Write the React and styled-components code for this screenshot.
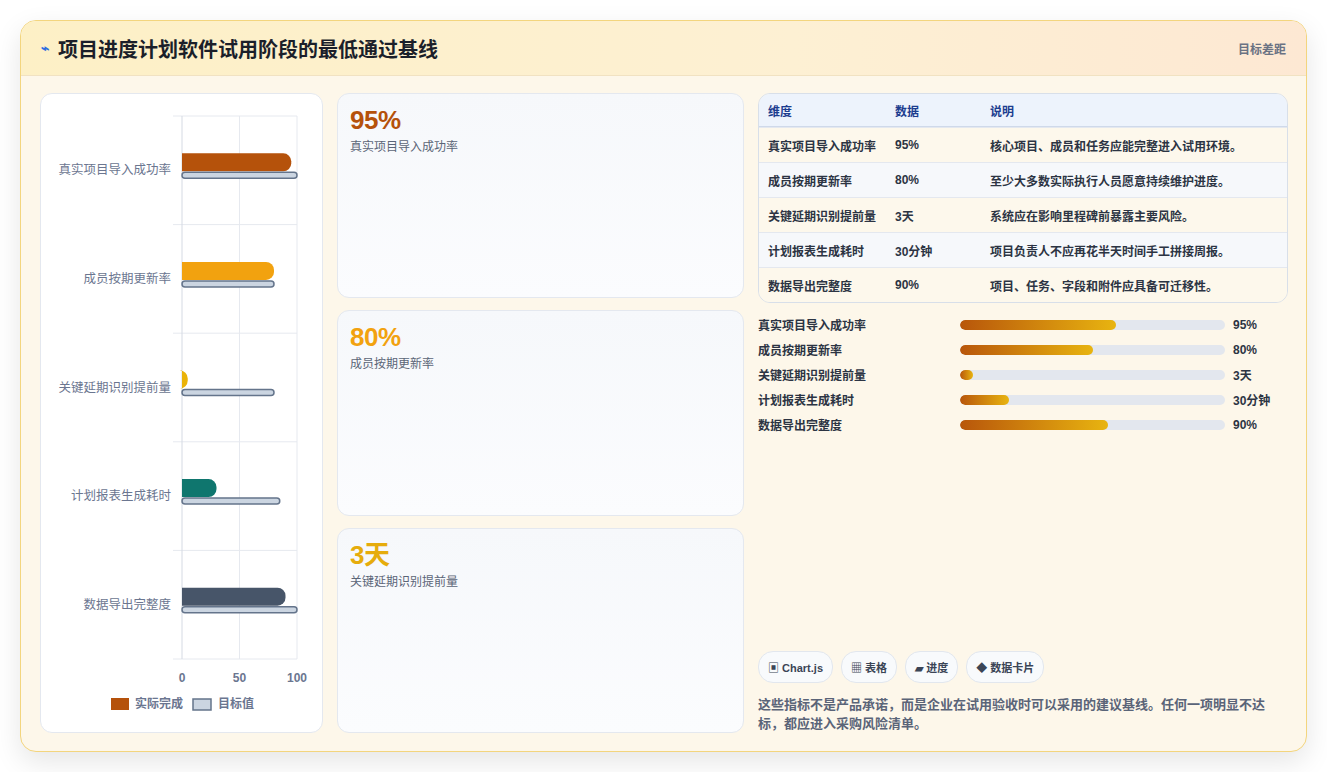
import React from "react";
import styled, { createGlobalStyle } from "styled-components";

const Global = createGlobalStyle`
  html, body { margin: 0; background: #fff; }
  body { font-family: "Liberation Sans", "Noto Sans CJK SC", sans-serif; }
  * { box-sizing: border-box; }
`;

const Page = styled.div`
  padding: 20px 20px 20px 20px;
  width: 1327px; height: 772px;
`;
const Frame = styled.div`
  width: 1287px; height: 732px;
  border: 1px solid #f3d57e;
  border-radius: 16px;
  background: #fdf7ea;
  box-shadow: 0 10px 28px rgba(0,0,0,0.10);
  overflow: hidden;
  display: flex; flex-direction: column;
`;
const Header = styled.div`
  height: 55px; flex: none;
  display: flex; align-items: center; justify-content: space-between;
  padding: 0 20px 0 20px;
  background: linear-gradient(90deg, #fdf0c6 0%, #fdf0d3 60%, #fde8d3 100%);
  border-bottom: 1px solid #f1e2c2;
`;
const Title = styled.h1`
  margin: 0; font-size: 20px; font-weight: 700; color: #1b1f2a;
  display: flex; align-items: center; gap: 9px;
`;
const Bolt = styled.span` color: #2f6fe0; font-size: 14px; `;
const Gap = styled.span` font-size: 12px; color: #6a7283; font-weight: 700; `;
const Body = styled.div`
  flex: 1; display: grid;
  grid-template-columns: 283px 407px 530px;
  gap: 14px; padding: 17px 19px 18px 19px;
`;
const Panel = styled.div`
  background: #fff; border: 1px solid #e4e8ef; border-radius: 12px;
`;
const Cards = styled.div`
  display: grid; grid-template-rows: repeat(3, 1fr); gap: 12px;
`;
const Card = styled.div`
  background: linear-gradient(180deg, #f6f8fb, #fbfcfe);
  border: 1px solid #e4e8ef; border-radius: 12px;
  padding: 11px 12px;
`;
const Big = styled.div`
  font-size: 26px; font-weight: 700; color: ${p => p.c}; letter-spacing: -0.5px; line-height: 30px;
`;
const CardLabel = styled.div` font-size: 12px; color: #5b6577; margin-top: 2px; `;
const Right = styled.div` display: flex; flex-direction: column; `;
const Table = styled.table`
  width: 100%; border-collapse: separate; border-spacing: 0;
  border: 1px solid #d8dfe9; border-radius: 12px; overflow: hidden;
  font-size: 12px; font-weight: 700; color: #2c3443;
  td, th { text-align: left; padding: 0 9px; height: 35px; border-top: 1px solid #e4e8ef; }
  th { height: 33px; border-top: none; background: #edf3fc; color: #1c3d8f; border-bottom: 1px solid #cfd9ea; }
  tr:nth-child(odd) td { background: #fdf8ec; }
  tr:nth-child(even) td { background: #f6f8fb; }
`;
const Bars = styled.div` display: flex; flex-direction: column; gap: 9px; margin-top: 13px; `;
const BarRow = styled.div`
  display: grid; grid-template-columns: 194px 265px auto; gap: 8px; align-items: center;
  font-size: 12px; font-weight: 700; color: #2c3443; height: 16px;
`;
const Track = styled.div` height: 10px; border-radius: 5px; background: #e3e7ee; overflow: hidden; `;
const Fill = styled.div`
  height: 100%; border-radius: 5px;
  background: linear-gradient(90deg, #b8560b, #e8b410);
`;
const Chips = styled.div` margin-top: auto; display: flex; gap: 8px; `;
const Chip = styled.span`
  padding: 7px 9px; border-radius: 15px; border: 1px solid #e2e7ee; background: #f8fafc;
  font-size: 11px; font-weight: 700; color: #3b4556;
`;
const Note = styled.p`
  margin: 12px 0 0; font-size: 13px; line-height: 19px; color: #5a6478; font-weight: 700; padding-right: 16px;
`;

const cats = ["真实项目导入成功率", "成员按期更新率", "关键延期识别提前量", "计划报表生成耗时", "数据导出完整度"];
const actual = [95, 80, 5, 30, 90];
const target = [100, 80, 80, 85, 100];
const colors = ["#b5520b", "#f2a20f", "#eab308", "#0f766e", "#475569"];

function Chart() {
  const x0 = 141, w = 115, top = 22, band = 108.6;
  return (
    <svg width="281" height="637" style={{ display: "block" }}>
      {[0, 1, 2, 3, 4, 5].map(i => (
        <line key={"h" + i} x1={132} x2={256} y1={top + i * band} y2={top + i * band} stroke="#e6e9ef" />
      ))}
      {[0, 50, 100].map((v, i) => (
        <g key={v}>
          <line x1={x0 + v * w / 100} x2={x0 + v * w / 100} y1={top} y2={top + 5 * band} stroke={i === 0 ? "#d5dae3" : "#e6e9ef"} />
          <text x={x0 + v * w / 100} y={588} textAnchor="middle" fontSize="12" fontWeight="700" fill="#6b7690">{v}</text>
        </g>
      ))}
      {cats.map((c, i) => {
        const cy = top + i * band + band / 2;
        return (
          <g key={c}>
            <text x={130} y={cy + 4} textAnchor="end" fontSize="12.5" fill="#6b7690">{c}</text>
            <path d={`M${x0} ${cy - 17} H${x0 + actual[i] * w / 100 - 8} a8 8 0 0 1 8 8 v2 a8 8 0 0 1 -8 8 H${x0} Z`} fill={colors[i]} />
            <rect x={x0} y={cy + 2} width={target[i] * w / 100} height={6} rx={3} fill="#cbd5e1" stroke="#64748b" strokeWidth="1.5" />
          </g>
        );
      })}
      <rect x={70} y={604} width={18} height={12} fill="#b5520b" />
      <text x={94} y={614} fontSize="12" fontWeight="700" fill="#6b7690">实际完成</text>
      <rect x={152} y={605} width={18} height={11} fill="#cbd5e1" stroke="#64748b" strokeWidth="1.5" />
      <text x={177} y={614} fontSize="12" fontWeight="700" fill="#6b7690">目标值</text>
    </svg>
  );
}

const rows = [
  ["真实项目导入成功率", "95%", "核心项目、成员和任务应能完整进入试用环境。", 59],
  ["成员按期更新率", "80%", "至少大多数实际执行人员愿意持续维护进度。", 50],
  ["关键延期识别提前量", "3天", "系统应在影响里程碑前暴露主要风险。", 5],
  ["计划报表生成耗时", "30分钟", "项目负责人不应再花半天时间手工拼接周报。", 18.5],
  ["数据导出完整度", "90%", "项目、任务、字段和附件应具备可迁移性。", 56],
];

export default function App() {
  return (
    <Page>
      <Global />
      <Frame>
        <Header>
          <Title><Bolt>⌁</Bolt>项目进度计划软件试用阶段的最低通过基线</Title>
          <Gap>目标差距</Gap>
        </Header>
        <Body>
          <Panel><Chart /></Panel>
          <Cards>
            <Card><Big c="#b5520b">95%</Big><CardLabel>真实项目导入成功率</CardLabel></Card>
            <Card><Big c="#f2a20f">80%</Big><CardLabel>成员按期更新率</CardLabel></Card>
            <Card><Big c="#e6ac0c">3天</Big><CardLabel>关键延期识别提前量</CardLabel></Card>
          </Cards>
          <Right>
            <Table>
              <colgroup><col style={{ width: 127 }} /><col style={{ width: 95 }} /><col /></colgroup>
              <thead><tr><th>维度</th><th>数据</th><th>说明</th></tr></thead>
              <tbody>
                {rows.map(r => <tr key={r[0]}><td>{r[0]}</td><td>{r[1]}</td><td>{r[2]}</td></tr>)}
              </tbody>
            </Table>
            <Bars>
              {rows.map(r => (
                <BarRow key={r[0]}>
                  <span>{r[0]}</span>
                  <Track><Fill style={{ width: r[3] + "%" }} /></Track>
                  <span>{r[1]}</span>
                </BarRow>
              ))}
            </Bars>
            <Chips>
              <Chip>▣ Chart.js</Chip>
              <Chip>▦ 表格</Chip>
              <Chip>▰ 进度</Chip>
              <Chip>◆ 数据卡片</Chip>
            </Chips>
            <Note>这些指标不是产品承诺，而是企业在试用验收时可以采用的建议基线。任何一项明显不达标，都应进入采购风险清单。</Note>
          </Right>
        </Body>
      </Frame>
    </Page>
  );
}
